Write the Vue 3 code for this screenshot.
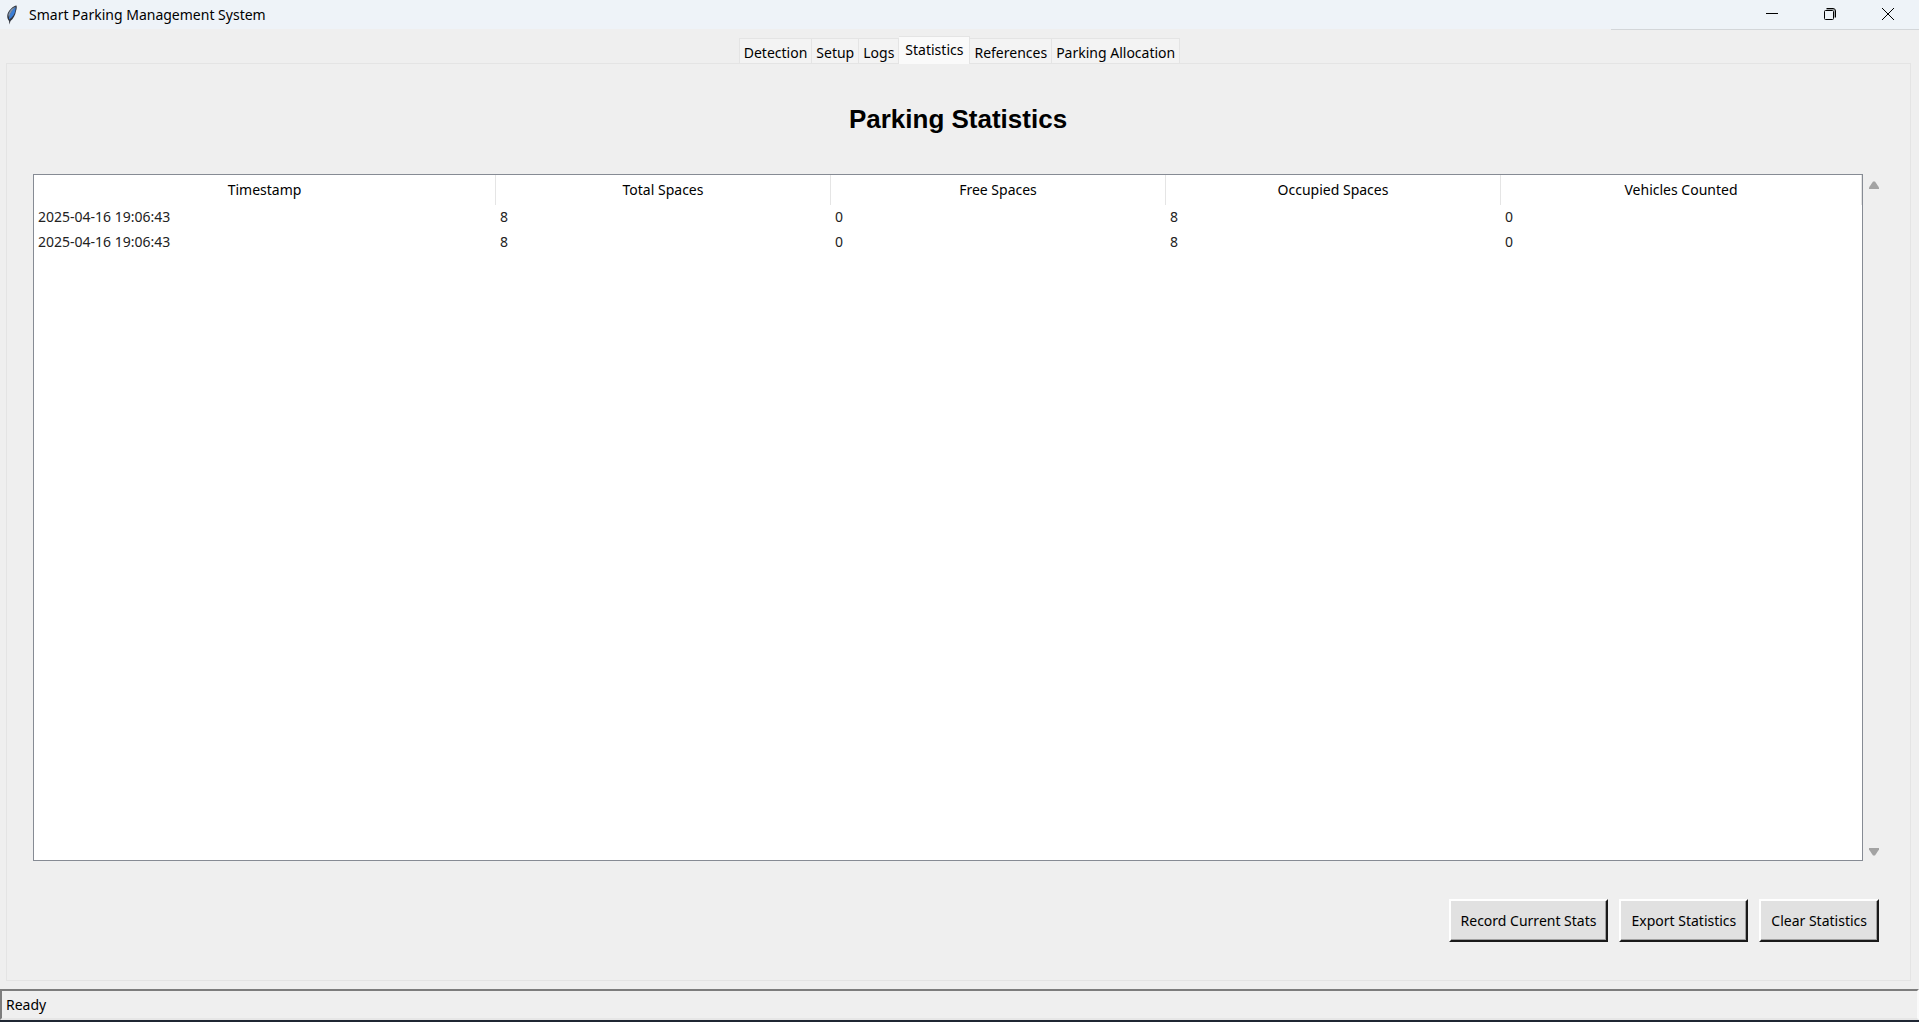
<script setup>
import { ref } from 'vue'

const tabs = ['Detection', 'Setup', 'Logs', 'Statistics', 'References', 'Parking Allocation']
const active = ref('Statistics')
const columns = ['Timestamp', 'Total Spaces', 'Free Spaces', 'Occupied Spaces', 'Vehicles Counted']
const rows = ref([
  ['2025-04-16 19:06:43', 8, 0, 8, 0],
  ['2025-04-16 19:06:43', 8, 0, 8, 0],
])
</script>

<template>
  <div class="window">
    <header class="titlebar">
      <svg class="feather" width="12" height="20" viewBox="0 0 12 20">
        <path d="M10.5 0.5 C7 1 3 5 1.5 9 C0.8 12 1.5 14 3 16 L3.5 19.5 L4.5 16 C7 14 9.500 10 10 6 C10.800 4 11 2 10.500 0.500Z" fill="#30343d" />
        <path d="M9.800 2 C6.500 4 3 9 3 14.500 C6.500 12.500 9 9 9.300 5.500Z" fill="#3b7ed6" />
        <path d="M9.500 1.500 C6 3 3 6 2.300 10 L3 12.500 C4 8.500 6.500 5 9.500 1.500Z" fill="#7f93ad" />
      </svg>
      <span class="title">Smart Parking Management System</span>
      <div class="controls">
        <button type="button" aria-label="Minimize">
          <svg width="12" height="12" viewBox="0 0 12 12"><path d="M0 5.500H12" /></svg>
        </button>
        <button type="button" aria-label="Restore">
          <svg width="12" height="12" viewBox="0 0 12 12">
            <path class="soft" d="M2.500 1.500H9A1.500 1.500 0 0 1 10.500 3V9.500" />
            <rect x="0.500" y="2.500" width="9" height="9" rx="1" />
            <path d="M2.500 0.500H9A2.500 2.500 0 0 1 11.500 3V9.500" />
          </svg>
        </button>
        <button type="button" aria-label="Close">
          <svg width="12" height="12" viewBox="0 0 12 12"><path d="M0 0L12 12M12 0L0 12" /></svg>
        </button>
      </div>
    </header>

    <nav class="tabs" role="tablist">
      <button
        v-for="tab in tabs"
        :key="tab"
        type="button"
        role="tab"
        class="tab"
        :class="{ active: tab === active }"
        :aria-selected="tab === active"
        @click="active = tab"
      >{{ tab }}</button>
    </nav>

    <main class="pane">
      <h1>Parking Statistics</h1>
      <div class="grid">
        <div class="tree">
          <table>
            <colgroup>
              <col class="c-time" /><col class="c-mid" /><col class="c-mid" /><col class="c-mid" /><col />
            </colgroup>
            <thead>
              <tr><th v-for="c in columns" :key="c" scope="col">{{ c }}</th></tr>
            </thead>
            <tbody>
              <tr v-for="(row, i) in rows" :key="i">
                <td v-for="(cell, j) in row" :key="j">{{ cell }}</td>
              </tr>
            </tbody>
          </table>
        </div>
        <div class="scrollbar">
          <svg width="10" height="8" viewBox="0 0 10 8"><path d="M4 0.500H6L10 6.500V8H0V6.500Z" /></svg>
          <svg width="10" height="8" viewBox="0 0 10 8"><path d="M0 0H10V1.500L6 7.500H4L0 1.500Z" /></svg>
        </div>
      </div>
      <div class="actions">
        <button type="button">Record Current Stats</button>
        <button type="button">Export Statistics</button>
        <button type="button">Clear Statistics</button>
      </div>
    </main>

    <footer class="status">Ready</footer>
  </div>
</template>

<style>
body {
  margin: 0;
}
</style>

<style scoped>
.window {
  display: flex;
  flex-direction: column;
  box-sizing: border-box;
  min-height: 100vh;
  background: #efefef;
  border-bottom: 2px solid #1f2633;
  color: #000;
  font: 14px/20px "Noto Sans", "Open Sans", sans-serif;
}
button {
  font: inherit;
  color: inherit;
  white-space: nowrap;
}
.titlebar {
  display: flex;
  align-items: center;
  height: 29px;
  padding-left: 6px;
  background: #eef3f8;
}
.title {
  margin-left: 11px;
}
/* The edge line under the caption only runs beneath its right-hand end. */
.controls {
  display: flex;
  justify-content: flex-end;
  box-sizing: border-box;
  width: 308px;
  height: 30px;
  margin: 0 0 -1px auto;
  padding-right: 2px;
  border-bottom: 1px solid #d3d6d9;
}
.controls button {
  display: flex;
  align-items: center;
  justify-content: center;
  width: 58px;
  height: 28px;
  padding: 0;
  border: 0;
  background: none;
}
.controls svg {
  fill: none;
  stroke: #000;
}
.controls .soft {
  stroke: #a0a3a6;
}
.tabs {
  display: flex;
  justify-content: center;
  align-items: flex-end;
  height: 34px;
}
.tab {
  height: 25px;
  padding: 3px 4px 0;
  border: 1px solid #e4e4e4;
  border-width: 1px 1px 0 0;
  background: #f3f3f3;
}
.tab:first-child {
  border-left-width: 1px;
}
.tab.active {
  height: 28px;
  margin-bottom: -1px;
  padding: 0 6px 2px;
  background: #fafafa;
  position: relative;
}
.pane {
  flex: 1;
  display: flex;
  flex-direction: column;
  margin: 0 8px 8px 6px;
  padding: 0 31px 38px 26px;
  border: 1px solid #e4e4e4;
}
h1 {
  margin: 40px 0;
  padding-left: 4px;
  font: bold 26px/30px "Liberation Sans", Arial, sans-serif;
  text-align: center;
}
.grid {
  flex: 1;
  display: flex;
}
.tree {
  flex: 1;
  border: 1px solid #868b94;
  background: #fff;
}
table {
  width: 100%;
  table-layout: fixed;
  border-collapse: separate;
  border-spacing: 0;
}
.c-time {
  width: 462px;
}
.c-mid {
  width: 335px;
}
th {
  height: 30px;
  padding: 0;
  border-right: 1px solid #e5e5e5;
  box-sizing: border-box;
  font-weight: normal;
}
td {
  box-sizing: border-box;
  height: 25px;
  padding: 0 4px 2px;
  color: #222;
}
.scrollbar {
  display: flex;
  flex-direction: column;
  justify-content: space-between;
  padding: 7px 0 5px 6px;
  fill: #a3a3a3;
}
.scrollbar svg {
  display: block;
}
.actions {
  display: flex;
  justify-content: flex-end;
  gap: 11px;
  margin-top: 38px;
}
.actions button {
  height: 43px;
  padding: 0 10px;
  border: 2px solid;
  border-color: #fff #1a1a1a #1a1a1a #fff;
  box-shadow: inset -1px -1px #a0a0a0;
  background: #e1e1e1;
}
.status {
  box-sizing: border-box;
  height: 31px;
  padding: 0 4px;
  border: 2px solid;
  border-color: #7d7d7d #fafafa #e6e6e6 #7d7d7d;
  line-height: 27px;
}
</style>
